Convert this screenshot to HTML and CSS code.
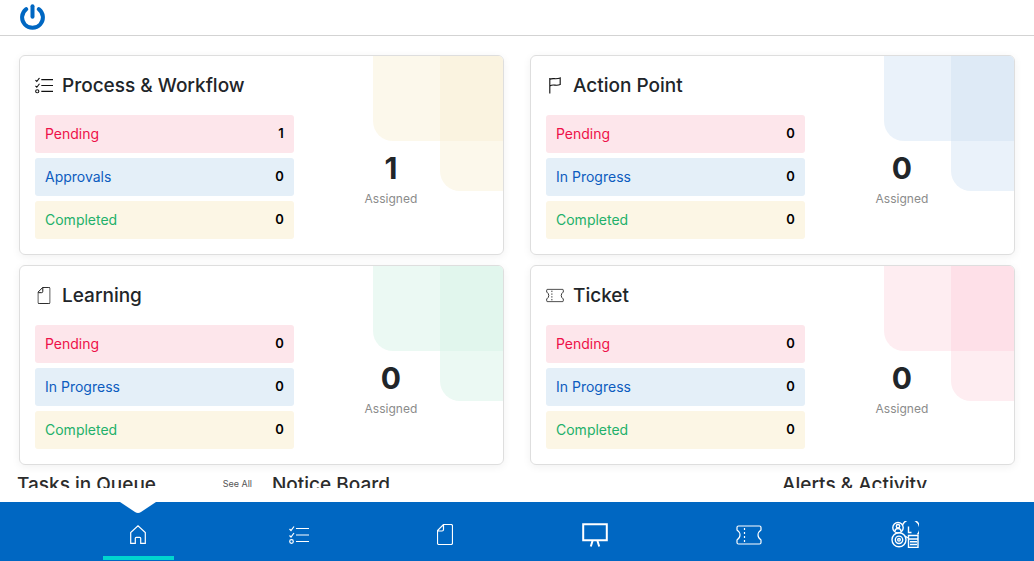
FILE: index.html
```html
<!DOCTYPE html>
<html lang="en">
<head>
<meta charset="utf-8">
<meta name="viewport" content="width=device-width, initial-scale=1">
<title>Dashboard</title>
<link rel="stylesheet" href="styles.css">
</head>
<body>
<svg class="sprite" aria-hidden="true">
  <symbol id="i-list" viewBox="0 0 20 18">
    <path d="M7 2.500h13M7 9h13M7 15.500h13M.5 3l1.500 1.500L5 .5M.5 9.500L2 11l3-4"/>
    <circle cx="2.500" cy="15.500" r="1.800"/>
  </symbol>
  <symbol id="i-flag" viewBox="0 0 14 18">
    <path d="M1.500 1v16.500M1.500 2.500C4.500.5 7.500 3 12.500 1v7C8 10 5 7 1.500 9.500"/>
  </symbol>
  <symbol id="i-doc" viewBox="0 0 16 21">
    <path d="M6.500.5H14Q15.500.5 15.500 2v17q0 1.500-1.500 1.500H2Q.5 20.500.5 19V6.500zM6.500.5v5q0 1.500-1.500 1.500H.8"/>
  </symbol>
  <symbol id="i-ticket" viewBox="0 0 26 20">
    <path d="M2.500 1h21q1.500 0 1.500 1.500V5q-3 2-3 5t3 5v2.500q0 1.500-1.500 1.500h-21Q1 19 1 17.500V15q3-2 3-5T1 5V2.500Q1 1 2.500 1z"/>
    <path d="M8.500 3v14" stroke-dasharray="2 2"/>
  </symbol>
</svg>

<header class="topbar">
  <a href="#" class="logo" aria-label="Home">
    <svg viewBox="0 0 26 26" width="26" height="26"><path d="M6.200 5.200A10.400 10.400 0 1 0 18.800 5.200" /><path d="M12.500 2.200v10.500"/></svg>
  </a>
</header>

<main class="content">
  <section class="cards">
    <article class="card card-yellow">
      <h2 class="card-title"><svg class="icon" viewBox="0 0 20 18"><use href="#i-list"/></svg>Process &amp; Workflow</h2>
      <div class="card-body">
        <ul class="stats">
          <li class="stat pending"><span>Pending</span><b>1</b></li>
          <li class="stat progress"><span>Approvals</span><b>0</b></li>
          <li class="stat completed"><span>Completed</span><b>0</b></li>
        </ul>
        <p class="total"><strong>1</strong><span>Assigned</span></p>
      </div>
    </article>
    <article class="card card-blue">
      <h2 class="card-title"><svg class="icon" viewBox="0 0 14 18"><use href="#i-flag"/></svg>Action Point</h2>
      <div class="card-body">
        <ul class="stats">
          <li class="stat pending"><span>Pending</span><b>0</b></li>
          <li class="stat progress"><span>In Progress</span><b>0</b></li>
          <li class="stat completed"><span>Completed</span><b>0</b></li>
        </ul>
        <p class="total"><strong>0</strong><span>Assigned</span></p>
      </div>
    </article>
    <article class="card card-green">
      <h2 class="card-title"><svg class="icon" viewBox="0 0 16 21"><use href="#i-doc"/></svg>Learning</h2>
      <div class="card-body">
        <ul class="stats">
          <li class="stat pending"><span>Pending</span><b>0</b></li>
          <li class="stat progress"><span>In Progress</span><b>0</b></li>
          <li class="stat completed"><span>Completed</span><b>0</b></li>
        </ul>
        <p class="total"><strong>0</strong><span>Assigned</span></p>
      </div>
    </article>
    <article class="card card-pink">
      <h2 class="card-title"><svg class="icon" viewBox="0 0 26 20"><use href="#i-ticket"/></svg>Ticket</h2>
      <div class="card-body">
        <ul class="stats">
          <li class="stat pending"><span>Pending</span><b>0</b></li>
          <li class="stat progress"><span>In Progress</span><b>0</b></li>
          <li class="stat completed"><span>Completed</span><b>0</b></li>
        </ul>
        <p class="total"><strong>0</strong><span>Assigned</span></p>
      </div>
    </article>
  </section>

  <div class="panels">
    <section class="panel"><h2>Tasks in Queue</h2><a href="#" class="see-all">See All</a></section>
    <section class="panel"><h2>Notice Board</h2></section>
    <section class="panel"><h2>Alerts &amp; Activity</h2></section>
  </div>
</main>

<nav class="bottom-nav">
  <a href="#" class="nav-link active" aria-label="Home" aria-current="page">
    <svg class="notch" viewBox="0 0 36 11" width="36" height="11"><path d="M0 0h36L21 10q-3 2-6 0z"/></svg>
    <svg width="16" height="19" viewBox="0 0 16 19"><path d="M.7 18.300V7.500L8 .9l7.300 6.600v10.800h-4.600v-5q0-1-1-1H6.300q-1 0-1 1v5z"/></svg>
  </a>
  <a href="#" class="nav-link" aria-label="Process and workflow"><svg width="20" height="18"><use href="#i-list"/></svg></a>
  <a href="#" class="nav-link" aria-label="Learning"><svg width="16" height="21"><use href="#i-doc"/></svg></a>
  <a href="#" class="nav-link" aria-label="Board"><svg class="bold" width="26" height="24" viewBox="0 0 26 24"><path d="M1.200 1.200h23.600v16H1.200zM10.500 18l-1.700 5.500M15.500 18l1.700 5.500"/></svg></a>
  <a href="#" class="nav-link" aria-label="Ticket"><svg width="26" height="20"><use href="#i-ticket"/></svg></a>
  <a href="#" class="nav-link" aria-label="Attendance">
    <svg class="attendance" width="28" height="27" viewBox="0 0 28 27">
      <path d="M11.500 4A9 9 0 1 1 26.500 13.500M17.500 5.500v6h3"/>
      <circle cx="7" cy="6.700" r="5.200"/><circle cx="7" cy="5.200" r="1.700"/><path d="M3.800 10.500q.3-3 3.200-3t3.200 3"/>
      <circle cx="8" cy="18.800" r="7"/><circle cx="8" cy="18.800" r="3.700"/><circle cx="8" cy="18.800" r="1.300"/>
      <path class="calc" d="M17.500 14.500h9.500v12h-9.500z"/><path d="M17.500 18H27M19 20.800h7M19 23.500h7M14 15l3 2"/>
    </svg>
  </a>
</nav>
</body>
</html>
```
FILE: styles.css
```css
* { box-sizing: border-box; }

body {
  margin: 0;
  height: 100vh;
  display: flex;
  flex-direction: column;
  background: #fff;
  color: #212529;
  font-family: Inter, "Open Sans", sans-serif;
}

h2, p, ul { margin: 0; padding: 0; }
ul { list-style: none; }
a { color: inherit; text-decoration: none; }

.sprite { position: absolute; width: 0; height: 0; }

svg { fill: none; stroke: currentColor; stroke-width: 1; }

.topbar {
  flex: none;
  height: 36px;
  padding: 4px 20px 0;
  border-bottom: 1px solid #d3d3d3;
}
.logo { display: inline-block; color: #0067c2; }
.logo svg { display: block; stroke-width: 4; stroke-linecap: round; }

.content {
  flex: 1;
  min-height: 0;
  margin-bottom: 14px;
  overflow-y: auto;
  scrollbar-width: none;
}

.cards {
  display: grid;
  grid-template-columns: 1fr 1fr;
  gap: 10px 26px;
  padding: 19px 19px 0;
}

.card {
  position: relative;
  overflow: hidden;
  padding: 14px 15px 15px;
  border: 1px solid #dedede;
  border-radius: 6px;
  box-shadow: 0 2px 8px rgba(0, 0, 0, .06);
}
.card::before,
.card::after {
  content: "";
  position: absolute;
  top: 0;
  right: 0;
  border-bottom-left-radius: 20px;
}
.card::before {
  width: 63px;
  height: 135px;
  background: var(--tint);
}
.card::after {
  width: 130px;
  height: 85px;
  background: linear-gradient(to left, var(--overlap) 63px, var(--tint) 63px);
}

.card-yellow { --tint: #fcf8eb; --overlap: #faf3e0; }
.card-blue { --tint: #eaf2fa; --overlap: #deeaf6; }
.card-green { --tint: #ebf9f3; --overlap: #e1f6ed; }
.card-pink { --tint: #feedf1; --overlap: #fee0e8; }

.card-title {
  display: flex;
  align-items: center;
  gap: 9px;
  height: 30px;
  margin-bottom: 15px;
  font-size: 19px;
  font-weight: 500;
}
.icon { width: 18px; height: 17px; color: #111; }
.card .icon { stroke-width: 1.200; }

.card-body {
  position: relative;
  z-index: 1;
  display: grid;
  grid-template-columns: 4fr 3fr;
}

.stats { display: grid; gap: 5px; }
.stat {
  display: flex;
  align-items: center;
  justify-content: space-between;
  height: 38px;
  padding: 0 10px 2px;
  border-radius: 3px;
  font-size: 14px;
}
.stat b { color: #000; font-size: 13px; font-weight: 600; }
.pending { background: #fde6eb; color: #ee1148; }
.progress { background: #e4eff8; color: #0c5cbf; }
.completed { background: #fcf6e5; color: #22b06a; }

.total {
  display: flex;
  flex-direction: column;
  align-items: center;
  padding-top: 33px;
}
.total strong { font-size: 30px; line-height: 40px; }
.total span { font-size: 12px; line-height: 22px; color: #8b8b8b; }

.panels {
  display: grid;
  grid-template-columns: 3fr 6fr 3fr;
  padding: 8px 7px 40px;
}
.panel {
  display: flex;
  align-items: flex-start;
  justify-content: space-between;
  padding: 0 10px;
}
.panel h2 { font-size: 19px; line-height: 24px; font-weight: 500; color: #2c2c2c; }
.see-all { font-size: 9px; line-height: 22px; color: #555; }

.bottom-nav {
  flex: none;
  display: flex;
  justify-content: space-between;
  height: 59px;
  padding: 0 115px 0 116px;
  background: #0067c2;
  color: #fff;
}
.nav-link {
  position: relative;
  display: flex;
  align-items: center;
  justify-content: center;
  padding-top: 6px;
}
.nav-link svg { stroke-width: 1.2; }
.nav-link .bold { stroke-width: 2; }
.nav-link .attendance { stroke-width: 1.400; }
.calc { fill: #0067c2; }

.active { width: 44px; }
.active::after {
  content: "";
  position: absolute;
  bottom: 1px;
  left: -13px;
  right: -14px;
  height: 4px;
  background: #00d5cf;
}
.active .notch {
  position: absolute;
  top: 0;
  left: 4px;
  fill: #fff;
  stroke: none;
}
```
